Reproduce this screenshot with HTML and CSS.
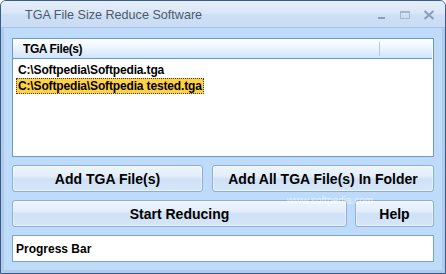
FILE: index.html
```html
<!DOCTYPE html>
<html>
<head>
<meta charset="utf-8">
<link rel="stylesheet" href="styles.css">
</head>
<body>
<div class="window">
  <div class="titlebar">
    <span class="title">TGA File Size Reduce Software</span>
    <div class="controls">
      <svg class="ctl" width="10" height="10" viewBox="0 0 10 10"><rect x="1" y="7" width="7" height="2" fill="#8a9db8"/></svg>
      <svg class="ctl" width="12" height="10" viewBox="0 0 12 10"><rect x="1.5" y="1.5" width="9" height="7" fill="none" stroke="#a6b6cc" stroke-width="1"/><rect x="1" y="1" width="10" height="2" fill="#a6b6cc"/></svg>
      <svg class="ctl" width="12" height="10" viewBox="0 0 12 10"><path d="M1.5 1 L10.5 9 M10.5 1 L1.5 9" stroke="#8a9db8" stroke-width="2"/></svg>
    </div>
  </div>
  <div class="frame">
    <div class="client">
      <div class="listbox">
        <div class="header">
          <span class="col1">TGA File(s)</span>
          <span class="col2"></span>
        </div>
        <div class="items">
          <div class="item"><span class="itext">C:\Softpedia\Softpedia.tga</span></div>
          <div class="item"><span class="itext sel">C:\Softpedia\Softpedia tested.tga</span></div>
        </div>
      </div>
      <div class="btnrow">
        <button class="btn add">Add TGA File(s)</button>
        <button class="btn addall">Add All TGA File(s) In Folder</button>
      </div>
      <div class="btnrow">
        <button class="btn start">Start Reducing</button>
        <button class="btn help">Help</button>
      </div>
      <div class="progress">Progress Bar</div>
      <div class="wm-small">www.softpedia.com</div>
    </div>
  </div>
</div>
</body>
</html>
```
FILE: styles.css
```css
* { box-sizing: border-box; }
html, body { margin: 0; padding: 0; }
body { width: 446px; height: 274px; overflow: hidden; background: #ffffff; font-family: "Liberation Sans", Arial, sans-serif; }

.window {
  width: 446px; height: 274px;
  border: 1px solid #3a5b86;
  border-radius: 6px 6px 0 0;
  overflow: hidden;
  display: flex; flex-direction: column;
  background: #b9d3f1;
}

.titlebar {
  height: 27px;
  flex: none;
  display: flex; align-items: center;
  padding: 2px 0 0 24px;
  background: linear-gradient(#e6effb 0%, #dbe7f7 45%, #cddff5 55%, #c8dcf4 100%);
  border-bottom: 1px solid #a7c1e3;
}
.title { font-size: 12.6px; color: #4d5a6a; flex: 1; }
.controls { display: flex; align-items: center; gap: 12px; padding-right: 10px; }
.ctl { display: block; }

.frame {
  flex: 1;
  border-left: 3px solid #b1cbec;
  border-right: 3px solid #b1cbec;
  border-bottom: 3px solid #b1cbec;
  display: flex;
}

.client {
  position: relative;
  flex: 1;
  background: #bfdbfa;
  padding: 10px 8px 8px 8px;
  display: flex; flex-direction: column; gap: 8px;
}

.listbox {
  height: 119px;
  flex: none;
  background: #ffffff;
  border: 1px solid #6b9ad3;
  display: flex; flex-direction: column;
}
.header {
  height: 20px;
  display: flex;
  margin-right: 1px;
  background: linear-gradient(#ffffff 0%, #eef6fe 40%, #cfe4fb 100%);
  border-bottom: 1px solid #6b9ad3;
}
.col1 {
  width: 367px;
  padding: 0 0 0 10px;
  font-size: 12px; font-weight: bold; letter-spacing: -0.4px; color: #000;
  border-right: 1px solid #a9cdef;
  margin: 3px 0 2px 0;
  line-height: 15px;
}
.col2 { flex: 1; }

.items { padding-top: 1px; }
.item { height: 16px; padding-left: 3px; }
.itext {
  display: inline-block;
  height: 16px;
  line-height: 14px;
  padding: 0 1px;
  border: 1px solid transparent;
  font-size: 12px; font-weight: bold; letter-spacing: -0.15px; color: #000;
}
.itext.sel {
  background: #ffd147;
  border: 1px dotted #3a3a3a;
}

.btnrow { display: flex; gap: 9px; height: 27px; flex: none; }
.btn {
  height: 27px;
  border: 1px solid #8daed6;
  border-radius: 3px;
  background: linear-gradient(#edf5fd 0%, #e3eefb 40%, #cfe1f6 52%, #d6e6f8 100%);
  font-family: "Liberation Sans", Arial, sans-serif;
  font-size: 14px; font-weight: bold; color: #000;
  padding: 0;
  box-shadow: inset 0 0 0 1px rgba(255,255,255,0.5);
}
.add { width: 191px; }
.addall { flex: 1; }
.start { flex: 1; }
.help { width: 79px; }
.btnrow + .btnrow { gap: 8px; }

.progress {
  height: 27px; flex: none;
  background: #ffffff;
  border: 1px solid #7aa3d5;
  padding-left: 3px;
  display: flex; align-items: center;
  font-size: 12px; font-weight: bold; color: #000;
}

.wm-small {
  position: absolute; left: 283px; top: 168px;
  font-size: 10px; line-height: 10px; color: rgba(255,255,255,0.6);
  pointer-events: none;
}
```
